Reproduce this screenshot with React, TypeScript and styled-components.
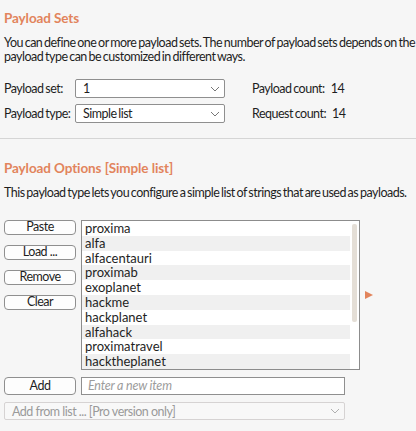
import React from 'react';
import styled, { createGlobalStyle } from 'styled-components';

const GlobalStyle = createGlobalStyle`
  html, body {
    margin: 0;
    padding: 0;
    background: #f6f6f6;
    overflow: hidden;
  }
  body {
    font-family: Lato, 'Open Sans', sans-serif;
    font-size: 12.5px;
    letter-spacing: -0.5px;
    word-spacing: -1px;
    color: #1e1e1e;
  }
`;

const Page = styled.div`
  width: 416px;
  height: 431px;
  overflow: hidden;
  white-space: nowrap;
`;

const Section = styled.section<{ $top: number }>`
  padding: ${({ $top }) => $top}px 4px 0 4px;
`;

const Heading = styled.h2`
  margin: 0;
  font-size: 13.5px;
  line-height: 16px;
  font-weight: 700;
  letter-spacing: -0.1px;
  word-spacing: 0;
  color: #e2845c;
`;

const Desc = styled.p<{ $mt: number }>`
  margin: ${({ $mt }) => $mt}px 0 0 0;
  line-height: 14px;
  white-space: pre;
`;

const FormGrid = styled.div`
  display: grid;
  grid-template-columns: 71px 150px 27px auto;
  grid-auto-rows: 19px;
  row-gap: 6px;
  align-items: center;
  margin-top: 15px;
`;

const Label = styled.span`
  line-height: 19px;
`;

const Select = styled.div<{ $disabled?: boolean }>`
  display: flex;
  align-items: center;
  justify-content: space-between;
  box-sizing: border-box;
  height: 19px;
  padding: 0 4px 0 7px;
  border: 1px solid ${({ $disabled }) => ($disabled ? '#d6d3d3' : '#8f8f8f')};
  border-radius: 2px;
  background: ${({ $disabled }) => ($disabled ? '#f8f8f8' : '#ffffff')};
  color: ${({ $disabled }) => ($disabled ? '#9a9a9a' : '#1e1e1e')};
`;

const Count = styled.span`
  grid-column: 4;
`;

const Num = styled.span`
  margin-left: 6px;
`;

const Divider = styled.div`
  margin-top: 15px;
  height: 1px;
  background: #d5d5d5;
`;

const ListArea = styled.div`
  display: grid;
  grid-template-columns: 72px 279px 16px;
  column-gap: 5px;
  margin-top: 20px;
`;

const ButtonColumn = styled.div`
  display: flex;
  flex-direction: column;
  gap: 10px;
`;

const Button = styled.button<{ $h?: number }>`
  box-sizing: border-box;
  width: 72px;
  height: ${({ $h }) => $h ?? 15}px;
  padding: 0;
  border: 1px solid #8f8f8f;
  border-radius: 4px;
  background: #fdfdfd;
  font: inherit;
  letter-spacing: inherit;
  line-height: 1;
  color: #1e1e1e;
`;

const ListBox = styled.div`
  position: relative;
  box-sizing: border-box;
  height: 150px;
  border: 1px solid #8c8c8c;
  background: #ffffff;
  overflow: hidden;
`;

const Row = styled.div<{ $shaded: boolean }>`
  height: 14.8px;
  line-height: 14.8px;
  padding-left: 3px;
  margin-right: 9px;
  font-size: 13px;
  letter-spacing: 0;
  background: ${({ $shaded }) => ($shaded ? '#f0f0f0' : 'transparent')};
`;

const ScrollThumb = styled.div`
  position: absolute;
  top: 3px;
  right: 2px;
  width: 5px;
  height: 98px;
  border-radius: 2px;
  background: #e4ded6;
`;

const Arrow = styled.div`
  align-self: start;
  margin-top: 71px;
  width: 0;
  height: 0;
  border-top: 4.5px solid transparent;
  border-bottom: 4.5px solid transparent;
  border-left: 8px solid #e2845c;
`;

const AddRow = styled.div`
  display: grid;
  grid-template-columns: 72px 264px;
  column-gap: 5px;
  margin-top: 7px;
`;

const Input = styled.div`
  box-sizing: border-box;
  height: 18px;
  padding-left: 6px;
  border: 1px solid #8f8f8f;
  background: #ffffff;
  color: #9c9c9c;
  font-style: italic;
  letter-spacing: -0.2px;
  word-spacing: 0;
  line-height: 16px;
`;

const AddFrom = styled(Select)`
  width: 341px;
  height: 18px;
  margin-top: 7px;
  word-spacing: 0;
`;

const Chevron = ({ color }: { color: string }) => (
  <svg width="10" height="6" viewBox="0 0 10 6">
    <path d="M1 1 L5 5 L9 1" fill="none" stroke={color} strokeWidth="1" />
  </svg>
);

const payloads = [
  'proxima',
  'alfa',
  'alfacentauri',
  'proximab',
  'exoplanet',
  'hackme',
  'hackplanet',
  'alfahack',
  'proximatravel',
  'hacktheplanet',
];

export default function App() {
  return (
    <Page>
      <GlobalStyle />
      <Section $top={10}>
        <Heading>Payload Sets</Heading>
        <Desc $mt={10}>
          {'You can define one or more payload sets. The number of payload sets depends on the a\npayload type can be customized in different ways.'}
        </Desc>
        <FormGrid>
          <Label>Payload set:</Label>
          <Select>
            <span>1</span>
            <Chevron color="#777" />
          </Select>
          <Count>
            Payload count:<Num>14</Num>
          </Count>
          <Label>Payload type:</Label>
          <Select>
            <span>Simple list</span>
            <Chevron color="#777" />
          </Select>
          <Count>
            Request count:<Num>14</Num>
          </Count>
        </FormGrid>
      </Section>
      <Divider />
      <Section $top={21}>
        <Heading>Payload Options [Simple list]</Heading>
        <Desc $mt={10}>
          This payload type lets you configure a simple list of strings that are used as payloads.
        </Desc>
        <ListArea>
          <ButtonColumn>
            <Button>Paste</Button>
            <Button>Load ...</Button>
            <Button>Remove</Button>
            <Button>Clear</Button>
          </ButtonColumn>
          <ListBox>
            {payloads.map((p, i) => (
              <Row key={p} $shaded={i % 2 === 1}>
                {p}
              </Row>
            ))}
            <ScrollThumb />
          </ListBox>
          <Arrow />
        </ListArea>
        <AddRow>
          <Button $h={18}>Add</Button>
          <Input>Enter a new item</Input>
        </AddRow>
        <AddFrom $disabled>
          <span>Add from list ... [Pro version only]</span>
          <Chevron color="#b0b0b0" />
        </AddFrom>
      </Section>
    </Page>
  );
}
